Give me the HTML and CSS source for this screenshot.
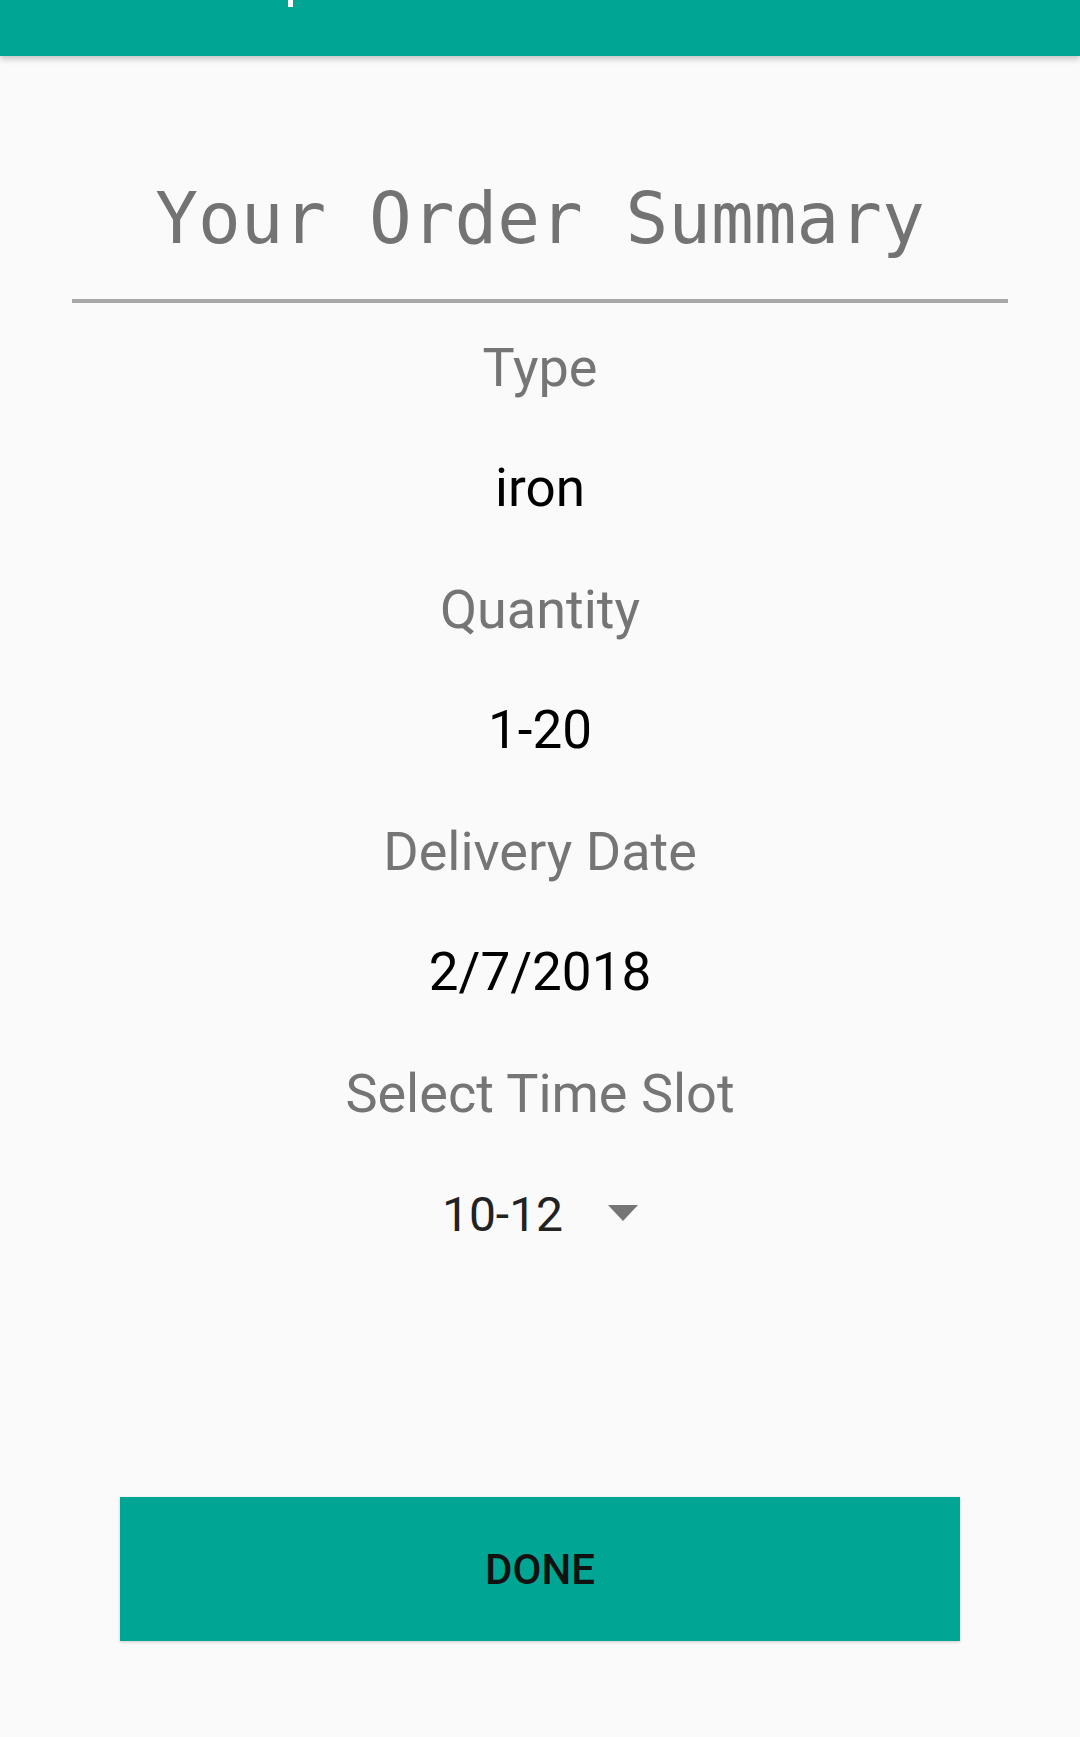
FILE: index.html
```html
<!DOCTYPE html>
<html>
<head>
<meta charset="utf-8">
<link rel="stylesheet" href="styles.css">
</head>
<body>
<div class="screen">
  <header class="toolbar"><span class="toolbar-mark"></span></header>
  <h1 class="title">Your Order Summary</h1>
  <div class="divider"></div>
  <div class="summary">
    <div class="row label">Type</div>
    <div class="row value">iron</div>
    <div class="row label">Quantity</div>
    <div class="row value">1-20</div>
    <div class="row label">Delivery Date</div>
    <div class="row value">2/7/2018</div>
    <div class="row label">Select Time Slot</div>
    <div class="row spinner"><span class="spinner-text">10-12</span><span class="spinner-arrow"></span></div>
  </div>
  <button class="done">DONE</button>
</div>
</body>
</html>
```
FILE: styles.css
```css
html, body {
  margin: 0;
  padding: 0;
  background: #fafafa;
}
.screen {
  width: 1080px;
  height: 1737px;
  background: #fafafa;
  font-family: Roboto, "Noto Sans", sans-serif;
  display: flex;
  flex-direction: column;
  overflow: hidden;
}
.toolbar {
  height: 56px;
  flex: 0 0 56px;
  background: #00a693;
  box-shadow: 0 3px 6px rgba(0,0,0,0.22);
  display: flex;
  align-items: flex-start;
  position: relative;
  z-index: 1;
}
.toolbar-mark {
  display: block;
  width: 5px;
  height: 7px;
  margin-left: 288px;
  background: #ffffff;
}
.title {
  margin: 120px 0 0;
  font-family: "DejaVu Sans Mono", "Liberation Mono", monospace;
  font-weight: normal;
  font-size: 71px;
  line-height: 85px;
  color: #737373;
  text-align: center;
}
.divider {
  margin: 38px 72px 0;
  height: 4px;
  background: #a8a8a8;
}
.summary {
  margin-top: 4px;
  display: flex;
  flex-direction: column;
}
.row {
  height: 121px;
  line-height: 121px;
  font-size: 53px;
  text-align: center;
}
.label {
  color: #757575;
  font-size: 54px;
}
.value {
  color: #000000;
}
.spinner {
  display: flex;
  justify-content: center;
  align-items: center;
  gap: 45px;
  color: #222222;
  font-size: 48px;
}
.spinner-arrow {
  width: 0;
  height: 0;
  border-left: 15.5px solid transparent;
  border-right: 15.5px solid transparent;
  border-top: 16px solid #757575;
  margin-top: -4px;
}
.done {
  margin: 222px 120px 0;
  height: 144px;
  border: none;
  background: #00a693;
  color: #111111;
  font-family: Roboto, "Noto Sans", sans-serif;
  font-weight: 500;
  font-size: 42px;
  box-shadow: 0 1px 3px rgba(0,0,0,0.2);
  padding: 0;
}
```
